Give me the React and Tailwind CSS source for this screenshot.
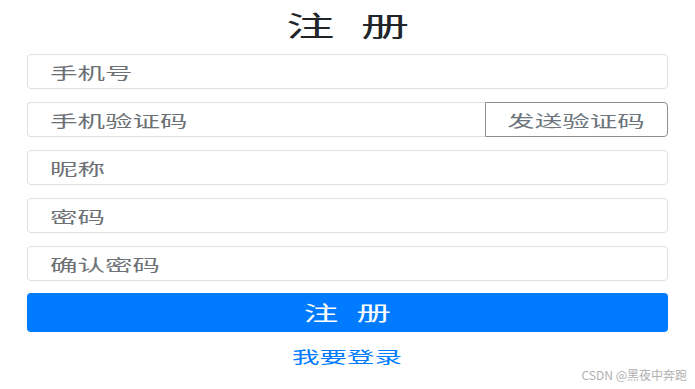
import React from 'react';

const font = { fontFamily: '"Noto Sans CJK SC", "Noto Sans", sans-serif' };

function Field({ placeholder, className = 'w-full rounded-[4px]' }) {
  return (
    <div className={`h-[35px] shrink-0 flex items-center border border-[#dcdfe3] bg-white pl-[22px] ${className}`}>
      <span className="inline-block origin-left scale-x-[1.72] text-[16px] leading-[16px] text-[#6d7175] whitespace-nowrap">
        {placeholder}
      </span>
    </div>
  );
}

export default function App() {
  return (
    <div className="relative w-[695px] h-[389px] bg-white overflow-hidden" style={font}>
      <div className="px-[27px]">
        <div className="h-[54px] flex items-center justify-center pb-[4px]">
          <span className="inline-flex gap-[15.5px] origin-center scale-x-[1.72] text-[28px] leading-[28px] text-[#212529]">
            <span>注</span>
            <span>册</span>
          </span>
        </div>

        <div className="flex flex-col gap-[13px]">
          <Field placeholder="手机号" />
          <div className="flex h-[35px]">
            <Field placeholder="手机验证码" className="flex-1 rounded-l-[4px] border-r-0" />
            <button className="w-[183px] h-[35px] shrink-0 flex items-center justify-center border border-[#8a8f94] rounded-r-[4px] bg-white">
              <span className="inline-block origin-center scale-x-[1.72] text-[16px] leading-[16px] text-[#6c757d] whitespace-nowrap">
                发送验证码
              </span>
            </button>
          </div>
          <Field placeholder="昵称" />
          <Field placeholder="密码" />
          <Field placeholder="确认密码" />
        </div>

        <button className="mt-[12px] w-full h-[39px] flex items-center justify-center rounded-[4px] bg-[#007bff]">
          <span className="inline-flex gap-[10.6px] origin-center scale-x-[1.72] text-[20px] leading-[20px] text-white">
            <span>注</span>
            <span>册</span>
          </span>
        </button>

        <div className="h-[48px] flex items-center justify-center">
          <a href="#" className="inline-block origin-center scale-x-[1.72] text-[16px] leading-[16px] text-[#007bff]">
            我要登录
          </a>
        </div>
      </div>

      <div className="absolute right-[8px] bottom-[7px] text-[12px] leading-[14px] text-[#b0b0b0]">
        CSDN @黑夜中奔跑
      </div>
    </div>
  );
}
